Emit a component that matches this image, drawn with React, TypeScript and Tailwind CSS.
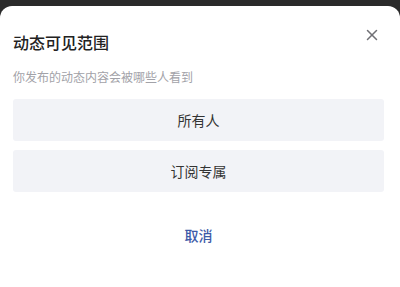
import { X } from 'lucide-react'

const options = ['所有人', '订阅专属']

export default function App() {
  return (
    <div
      className="h-[287px] w-[400px] overflow-hidden bg-[#2a2a2a] pt-[6px]"
      style={{ fontFamily: '"Noto Sans CJK SC", "Noto Sans", sans-serif' }}
    >
      <div className="relative h-full rounded-t-[12px] bg-white pl-[13px] pr-[16px]">
        <button className="absolute right-[19px] top-[20px] text-[#707075]" aria-label="关闭">
          <X className="h-[18px] w-[18px]" strokeWidth={2} />
        </button>
        <h2 className="pt-[24px] text-[16px] font-medium leading-[24px] text-[#222]">动态可见范围</h2>
        <p className="mt-[14px] text-[12px] leading-[18px] text-[#a2a2a8]">你发布的动态内容会被哪些人看到</p>
        <div className="mt-[13px] flex flex-col gap-[9px]">
          {options.map((label) => (
            <button
              key={label}
              className="flex h-[42px] w-full items-center justify-center rounded-[3px] bg-[#f2f3f7] text-[14px] text-[#333]"
            >
              {label}
            </button>
          ))}
        </div>
        <div className="mt-[33px] text-center text-[14px] font-medium text-[#3d5aa8]">取消</div>
      </div>
    </div>
  )
}
